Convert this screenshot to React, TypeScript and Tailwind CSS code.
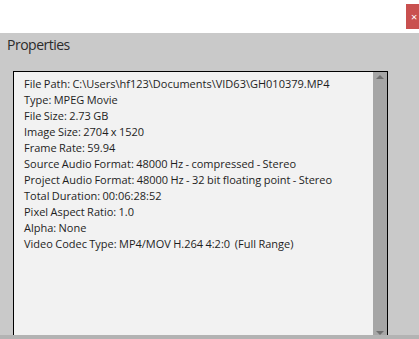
import React from "react";

const lines = [
  "File Path: C:\\Users\\hf123\\Documents\\VID63\\GH010379.MP4",
  "Type: MPEG Movie",
  "File Size: 2.73 GB",
  "Image Size: 2704 x 1520",
  "Frame Rate: 59.94",
  "Source Audio Format: 48000 Hz - compressed - Stereo",
  "Project Audio Format: 48000 Hz - 32 bit floating point - Stereo",
  "Total Duration: 00:06:28:52",
  "Pixel Aspect Ratio: 1.0",
  "Alpha: None",
  "Video Codec Type: MP4/MOV H.264 4:2:0  (Full Range)",
];

const App = () => {
  return (
    <div
      className="w-[419px] h-[339px] flex flex-col bg-white overflow-hidden"
      style={{ fontFamily: '"Open Sans", "Noto Sans", sans-serif' }}
    >
      <div className="h-[33px] flex justify-end items-start pt-[4px]">
        <div className="w-[13px] h-[25px] bg-[#c9504f] text-white text-[11px] leading-[25px] pl-[5px] overflow-hidden">
          ×
        </div>
      </div>

      <div className="flex-1 bg-[#c9c9c9] flex flex-col min-h-0">
        <div className="pl-[7px] pt-[3px] h-[38px] text-[14px] leading-[18px] tracking-[-0.5px] text-[#2b2b2b]">
          Properties
        </div>
        <div className="flex flex-1 min-h-0 pl-[13px]">
          <div className="flex w-[375px] border-l border-t border-r border-black bg-[#f2f2f2]">
            <div className="flex-1 pl-[10px] pt-[4px] text-[11px] leading-[16px] text-[#1e1e1e] whitespace-pre [word-spacing:-0.5px]">
              {lines.map((l, i) => (
                <div key={i}>{l}</div>
              ))}
            </div>
            <div className="w-[14px] bg-[#a6a6a6] flex flex-col justify-between items-center py-[3px]">
              <div className="w-0 h-0 border-l-[4px] border-r-[4px] border-b-[4px] border-l-transparent border-r-transparent border-b-[#6e6e6e]" />
              <div className="w-0 h-0 border-l-[4px] border-r-[4px] border-t-[4px] border-l-transparent border-r-transparent border-t-[#6e6e6e] mb-[-3px]" />
            </div>
          </div>
        </div>
      </div>
      <div className="h-[4px] bg-[#b3b3b3]" />
    </div>
  );
};

export default App;
